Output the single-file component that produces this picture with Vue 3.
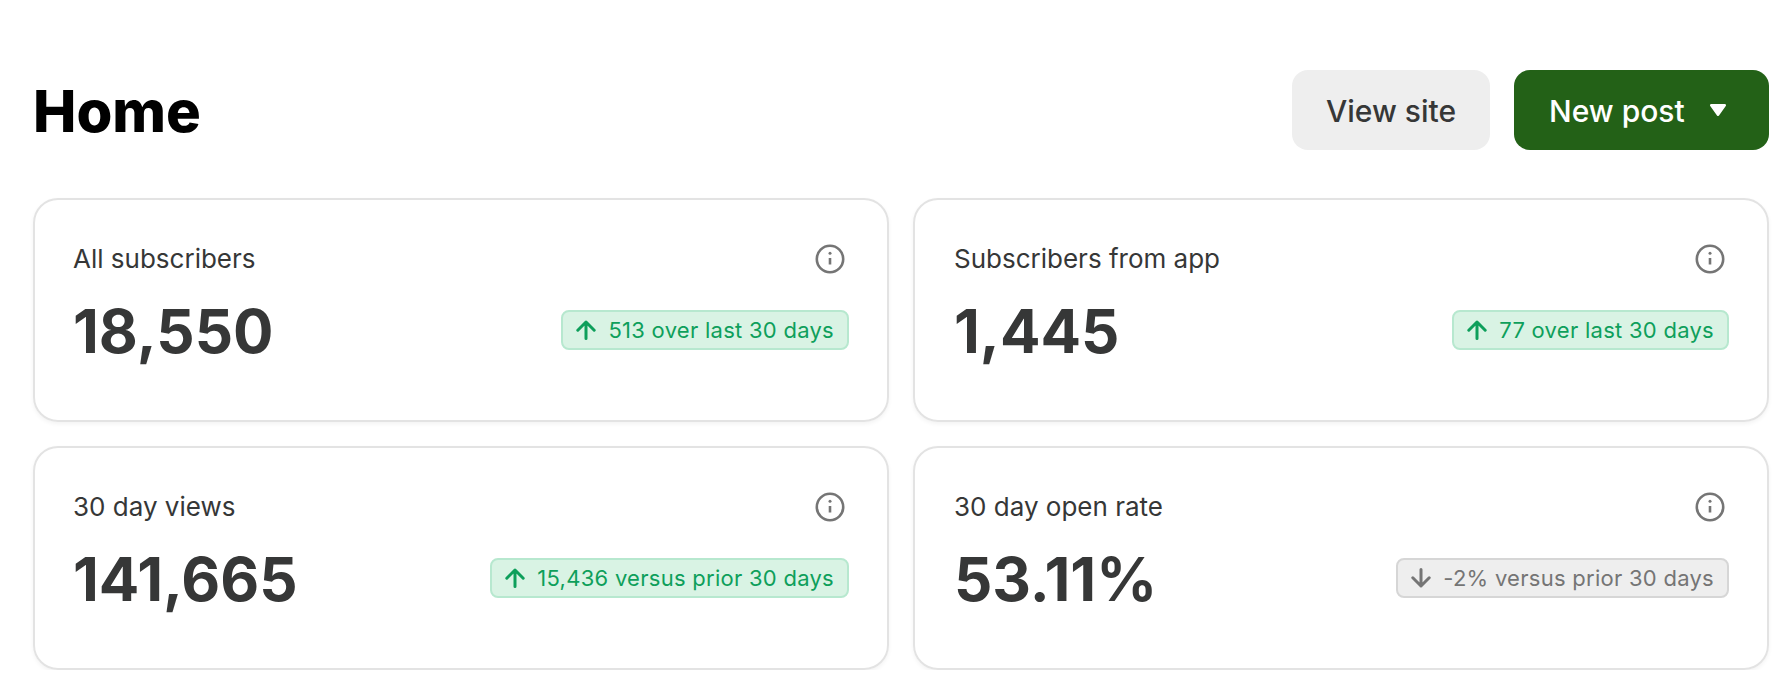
<script setup>
const cards = [
  { label: 'All subscribers', value: '18,550', delta: '513 over last 30 days', up: true },
  { label: 'Subscribers from app', value: '1,445', delta: '77 over last 30 days', up: true },
  { label: '30 day views', value: '141,665', delta: '15,436 versus prior 30 days', up: true },
  { label: '30 day open rate', value: '53.11%', delta: '-2% versus prior 30 days', up: false }
]
</script>

<template>
  <div class="page">
    <header class="top">
      <h1>Home</h1>
      <div class="actions">
        <button class="btn view">View site</button>
        <button class="btn new">
          New post
          <svg class="caret" width="16" height="12" viewBox="0 0 16 12"><path d="M1.25 1.25h13.5L8 10.75z" fill="#fff" stroke="#fff" stroke-width="2.5" stroke-linejoin="round"/></svg>
        </button>
      </div>
    </header>

    <div class="grid">
      <div v-for="c in cards" :key="c.label" class="card">
        <div class="row">
          <span class="label">{{ c.label }}</span>
          <svg class="info" width="30" height="30" viewBox="0 0 30 30" fill="none" stroke="#757575" stroke-width="2.6">
            <circle cx="15" cy="15" r="13.2"/>
            <path d="M15 14v6.5"/>
            <circle cx="15" cy="9.3" r="1.5" fill="#757575" stroke="none"/>
          </svg>
        </div>
        <div class="row bottom">
          <span class="value">{{ c.value }}</span>
          <span class="badge" :class="{ down: !c.up }">
            <svg width="20" height="20" viewBox="0 0 20 20" fill="none" stroke="currentColor" stroke-width="3" stroke-linecap="round" stroke-linejoin="round">
              <path v-if="c.up" d="M10 18.5V2M1.8 10.2L10 2l8.2 8.2"/>
              <path v-else d="M10 1.5V18M1.8 9.8L10 18l8.2-8.2"/>
            </svg>
            {{ c.delta }}
          </span>
        </div>
      </div>
    </div>
  </div>
</template>

<style>
body {
  background: #fff;
}
</style>

<style scoped>
.page {
  padding: 70px 23px 0 33px;
  font-family: Inter, "Liberation Sans", sans-serif;
}
.top {
  display: flex;
  justify-content: space-between;
  align-items: center;
  height: 80px;
  margin-bottom: 48px;
}
h1 {
  margin: 0;
  padding-top: 2px;
  font-size: 58px;
  font-weight: 800;
  color: #000;
}
.actions {
  display: flex;
  gap: 24px;
}
.btn {
  height: 80px;
  padding-top: 2px;
  border: none;
  border-radius: 16px;
  font-family: inherit;
  font-size: 30px;
  font-weight: 500;
  display: flex;
  align-items: center;
}
.view {
  width: 198px;
  justify-content: center;
  background: #eee;
  color: #363737;
}
.new {
  width: 255px;
  padding-left: 35px;
  background: #236117;
  color: #fff;
}
.caret {
  margin-top: -2px;
  margin-left: 25px;
}
.grid {
  display: grid;
  grid-template-columns: 856px 1fr;
  column-gap: 24px;
  row-gap: 24px;
}
.card {
  box-sizing: border-box;
  height: 224px;
  padding: 43px 38px 0 38px;
  border: 2px solid #e3e3e3;
  border-radius: 25px;
  box-shadow: 0 2px 4px rgba(0, 0, 0, 0.05);
}
.card:nth-child(even) {
  padding-left: 39px;
}
.row {
  display: flex;
  justify-content: space-between;
  align-items: center;
}
.info {
  margin-right: 4px;
}
.bottom {
  margin-top: 22px;
}
.label {
  font-size: 26px;
  color: #363737;
}
.value {
  font-size: 60px;
  font-weight: 700;
  color: #363737;
  line-height: 70px;
}
.badge {
  display: flex;
  align-items: center;
  gap: 12px;
  height: 40px;
  box-sizing: border-box;
  margin-bottom: 2px;
  padding: 0 13px;
  border: 2px solid #b7e8cf;
  border-radius: 8px;
  background: #d9f3e4;
  color: #0e9f5b;
  font-size: 22px;
  letter-spacing: 0.27px;
}
.badge.down {
  border-color: #d6d6d6;
  background: #eee;
  color: #757575;
}
</style>
